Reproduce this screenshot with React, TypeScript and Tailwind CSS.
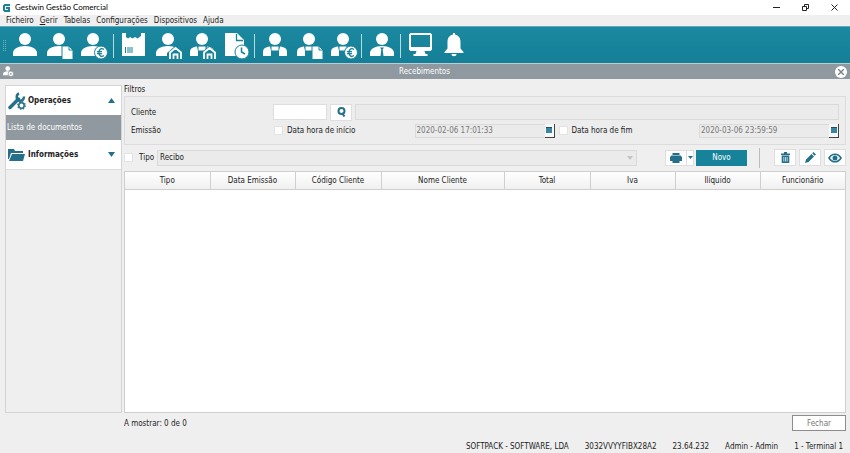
import type { ReactNode } from "react";

const Person = ({ tie, split }: { tie?: boolean; split?: boolean }) => (
  <>
    <circle cx="12" cy="6" r="6" />
    {split ? (
      <>
        <path d="M0 23v-4c0-3 2-5 7-5.500l1 4.500v5z" />
        <path d="M17 13.500c5 .5 7 2.500 7 5.500v4h-8v-5z" />
        <path d="M8.500 13.500h7v4h-7z" />
      </>
    ) : (
      <path d="M0 23v-3c0-4 5-7 12-7s12 3 12 7v3z" />
    )}
    {tie && <path d="M10 14.500h4l-1.300 2 .8 6.500h-3l.8-6.500z" fill="#16839b" />}
  </>
);

const Doc = () => (
  <>
    <path d="M15 13h7l4 4v9.500H15z" fill="#fff" stroke="#16839b" />
    <path d="M22 13v4h4" fill="none" stroke="#16839b" />
  </>
);

const Euro = () => (
  <>
    <circle cx="20" cy="19.500" r="6.500" fill="#fff" stroke="#16839b" />
    <path
      d="M23 16.500c-3-2-5 0-5 3s2 5 5 3M16 18.700h5M16 20.700h5"
      fill="none"
      stroke="#16839b"
      strokeWidth="1.300"
    />
  </>
);

const House = () => (
  <>
    <path d="M11 20l8-7 9 7v7H11z" fill="#16839b" />
    <path
      d="M14 26v-6.500l5.500-4.500 5.500 4.500V26M17.500 26v-4.500h4V26"
      fill="none"
      stroke="#fff"
      strokeWidth="1.800"
    />
  </>
);

const ToolButton = ({ label, children }: { label: string; children: ReactNode }) => (
  <button aria-label={label} className="w-[34px] shrink-0 pl-1">
    <svg width="28" height="27" viewBox="0 0 28 27" fill="#fff">
      {children}
    </svg>
  </button>
);

const Divider = () => <span className="h-6 w-px shrink-0 bg-[#b5dae2]" />;

const Toolbar = () => (
  <div className="flex h-[37px] items-center border-t border-[#63a9b8] bg-linear-to-b from-[#1b89a1] to-[#147f96] pt-[2px]">
    <svg width="9" height="12" fill="none" stroke="#6cb2c2" strokeDasharray="1 1" className="shrink-0">
      <path d="M3.500 0v12M5.500 0v12" />
    </svg>
    <ToolButton label="Clientes">
      <Person />
    </ToolButton>
    <ToolButton label="Documentos de clientes">
      <Person />
      <Doc />
    </ToolButton>
    <ToolButton label="Recebimentos">
      <Person />
      <Euro />
    </ToolButton>
    <span className="w-[2px]" />
    <Divider />
    <span className="w-1" />
    <ToolButton label="Artigos">
      <path d="M0 0h4v4l2 1.500L8 4l2.500 1.500L13 4l2.500 1.500L19 3V0h4v23H0z" />
      <path d="M3.500 14v6M6 14v6M8 14v6M10 14v6" stroke="#16839b" />
    </ToolButton>
    <ToolButton label="Armazéns">
      <Person />
      <House />
    </ToolButton>
    <ToolButton label="Fornecedores">
      <Person split />
      <House />
    </ToolButton>
    <ToolButton label="Pendentes">
      <path d="M1 0h12l7 7v16H1z" />
      <path d="M12.500 1v6.500H19" fill="none" stroke="#16839b" strokeWidth="1.300" />
      <circle cx="18" cy="19" r="7" stroke="#16839b" />
      <path d="M17.500 14.500V19l3.500 2" fill="none" stroke="#16839b" strokeWidth="1.500" />
    </ToolButton>
    <Divider />
    <span className="w-1" />
    <ToolButton label="Vendedores">
      <Person split />
    </ToolButton>
    <ToolButton label="Documentos de vendedores">
      <Person split />
      <Doc />
    </ToolButton>
    <ToolButton label="Comissões">
      <Person split />
      <Euro />
    </ToolButton>
    <Divider />
    <span className="w-1" />
    <ToolButton label="Funcionários">
      <Person tie />
    </ToolButton>
    <Divider />
    <span className="w-1" />
    <ToolButton label="Terminal">
      <path
        d="M1.500 0h20L23 1.500v15L21.500 18h-6l1 3h2v2h-14v-2h2l1-3h-6L0 16.500v-15zM2 2v12h19V2z"
        fillRule="evenodd"
      />
    </ToolButton>
    <ToolButton label="Notificações">
      <path d="M10 0h2v1.500c4 1 5.500 4 5.500 7.500v6.500l3 3.500v1h-19v-1l3-3.500V9c0-3.500 1.500-6.500 5.500-7.500zM8.500 21h5c0 3-5 3-5 0z" />
    </ToolButton>
  </div>
);

const TitleBar = () => (
  <header className="flex h-[15px] items-center bg-white pl-[3px] font-[Lato,sans-serif] text-[8px] text-black">
    <svg width="7" height="8" viewBox="0 0 7 8" fill="none" stroke="#16839b" strokeWidth="2">
      <path d="M7 1H2L1 2v4l1 1h4V4H3" />
    </svg>
    <h1 className="ml-[5px] grow">Gestwin Gestão Comercial</h1>
    <div className="flex gap-[22px] pr-3">
      <button aria-label="Minimizar">
        <svg width="7" height="7" stroke="#222"><path d="M0 3.500h7" /></svg>
      </button>
      <button aria-label="Restaurar">
        <svg width="7" height="7" fill="none" stroke="#222"><path d="M.5 2.500h4v4h-4zM2.500 2V.5h4v4H5" /></svg>
      </button>
      <button aria-label="Fechar janela">
        <svg width="7" height="7" stroke="#222"><path d="M.5.5l6 6M6.500.5l-6 6" /></svg>
      </button>
    </div>
  </header>
);

const Menu = () => (
  <nav className="flex h-[11px] items-center gap-[6px] pl-[6px]">
    <button>Ficheiro</button>
    <button><u>G</u>erir</button>
    <button>Tabelas</button>
    <button>Configurações</button>
    <button>Dispositivos</button>
    <button>Ajuda</button>
  </nav>
);

const Sidebar = () => (
  <aside className="flex w-[117px] shrink-0 flex-col border border-[#d4d4d4]">
    <button className="flex h-[29px] items-center bg-white px-[2px] font-bold">
      <svg width="18" height="18" viewBox="0 0 18 18" fill="none" stroke="#24708a">
        <path d="M2 15.500L10.500 7" strokeWidth="3.500" strokeLinecap="round" />
        <path d="M11 1.500c-3 1-3 6 0 7s5-1 5-4" strokeWidth="2.500" />
        <circle cx="13.500" cy="13.500" r="2.700" strokeWidth="1.500" />
        <circle cx="13.500" cy="13.500" r="3.800" strokeWidth="1.200" strokeDasharray="1.500 1.480" />
      </svg>
      <span className="ml-[2px] grow text-left">Operações</span>
      <svg width="7" height="5" fill="#24708a" className="mr-1"><path d="M0 5L3.500 0 7 5z" /></svg>
    </button>
    <a href="#lista" className="flex h-[25px] items-center bg-[#8f999f] pl-px text-white">
      Lista de documentos
    </a>
    <button className="flex h-[30px] items-center border-b border-[#ddd] bg-white px-[2px] font-bold">
      <svg width="18" height="14" viewBox="0 0 18 14" fill="#24708a">
        <path d="M0 1h6l1 2h8v2H3L1 11H0z" />
        <path d="M4 6h13l-2 7H1z" />
      </svg>
      <span className="ml-[2px] grow text-left">Informações</span>
      <svg width="7" height="5" fill="#24708a" className="mr-1"><path d="M0 0h7L3.500 5z" /></svg>
    </button>
  </aside>
);

const CheckBox = ({ id }: { id: string }) => (
  <input
    id={id}
    type="checkbox"
    className="size-[9px] shrink-0 appearance-none border border-[#e2e2e2] bg-white"
  />
);

const DateField = ({ id, label, value }: { id: string; label: string; value: string }) => (
  <div className="flex min-w-0 flex-1 items-center">
    <CheckBox id={`${id}-on`} />
    <label htmlFor={`${id}-on`} className="ml-1 flex-1">{label}</label>
    <input
      aria-label={label}
      disabled
      defaultValue={value}
      className="h-[14px] w-[130px] min-w-0 border border-r-0 border-[#dadada] bg-[#ebebeb] px-px text-[#777]"
    />
    <button
      aria-label={`Calendário ${label}`}
      className="flex h-[14px] w-[10px] items-center justify-center border-r border-b border-[#444] bg-[#f8f8f8]"
    >
      <svg width="6" height="6"><path d="M0 0h6v6H0z" fill="#3986a3" /><path d="M0 .5h6" stroke="#204f68" /></svg>
    </button>
  </div>
);

const Filters = () => (
  <section>
    <h2 className="h-[11px] leading-[10px]">Filtros</h2>
    <div className="flex h-[49px] flex-col justify-center gap-[3px] border border-[#dcdcdc] bg-[#ededed] px-[6px]">
      <div className="flex items-center">
        <label htmlFor="cliente" className="w-[142px] shrink-0">Cliente</label>
        <input id="cliente" className="h-4 w-[54px] border border-[#dedede] bg-white" />
        <button
          aria-label="Procurar"
          className="mx-[3px] flex h-[17px] w-[22px] shrink-0 items-center justify-center border border-[#dedede] bg-white"
        >
          <svg width="9" height="10" viewBox="0 0 9 10" fill="none" stroke="#24708a" strokeWidth="2">
            <circle cx="4.500" cy="4" r="3" />
            <path d="M5 6l2.500 3.500" />
          </svg>
        </button>
        <input aria-label="Nome do cliente" disabled className="h-4 min-w-0 flex-1 border border-[#dadada] bg-[#ebebeb]" />
      </div>
      <div className="flex items-center">
        <span className="w-[143px] shrink-0">Emissão</span>
        <div className="flex flex-1 gap-1">
          <DateField id="inicio" label="Data hora de início" value="2020-02-06 17:01:33" />
          <DateField id="fim" label="Data hora de fim" value="2020-03-06 23:59:59" />
        </div>
      </div>
    </div>
  </section>
);

const Actions = () => (
  <div className="mt-1 flex h-[17px] items-center">
    <CheckBox id="tipo-on" />
    <label htmlFor="tipo-on" className="ml-[6px] w-[18px]">Tipo</label>
    <div className="relative flex flex-1">
      <select
        aria-label="Tipo"
        disabled
        className="h-4 w-full appearance-none border border-[#dadada] bg-[#ebebeb] px-[2px] opacity-100"
      >
        <option>Recibo</option>
      </select>
      <svg width="6" height="4" fill="#c4c4c4" className="absolute top-[6px] right-1"><path d="M0 0h6L3 4z" /></svg>
    </div>
    <div className="ml-7 flex h-4 border border-[#dedede] bg-white">
      <button aria-label="Imprimir" className="flex w-5 items-center justify-center">
        <svg width="12" height="10" viewBox="0 0 12 10" fill="#24708a">
          <path d="M2.500 0h7v2h-7zM1.500 2.500h9L12 4v4H9.500v2h-7V8H0V4z" />
        </svg>
      </button>
      <button aria-label="Opções de impressão" className="flex w-[7px] items-center justify-center border-l border-[#dedede]">
        <svg width="5" height="3" fill="#24708a"><path d="M0 0h5L2.500 3z" /></svg>
      </button>
    </div>
    <button className="ml-[2px] h-4 w-[51px] bg-[#16839b] text-white">Novo</button>
    <span className="ml-3 h-5 w-px bg-[#bcbcbc]" />
    <div className="ml-[14px] flex gap-[3px]">
      <button aria-label="Eliminar" className="flex h-[17px] w-[22px] items-center justify-center border border-[#dedede] bg-white">
        <svg width="9" height="11" viewBox="0 0 9 11" fill="#24708a">
          <path d="M0 1.500h3V0h3v1.500h3V3H0zM.7 3.500h7.600V11H.7z" />
          <path d="M2.800 5v4.500M4.500 5v4.500M6.200 5v4.500" stroke="#fff" strokeWidth=".7" />
        </svg>
      </button>
      <button aria-label="Editar" className="flex h-[17px] w-[22px] items-center justify-center border border-[#dedede] bg-white">
        <svg width="11" height="11" viewBox="0 0 11 11" fill="#24708a">
          <path d="M0 11l1-3.500L6.500 2 9 4.500 3.500 10zM7.200 1.300L8.500 0 11 2.500 9.700 3.800z" />
        </svg>
      </button>
      <button aria-label="Ver" className="flex h-[17px] w-[22px] items-center justify-center border border-[#dedede] bg-white">
        <svg width="14" height="10" viewBox="0 0 14 10" fill="none" stroke="#24708a" strokeWidth="1.600">
          <path d="M1 5c3-5 9-5 12 0-3 5-9 5-12 0z" />
          <circle cx="7" cy="5" r="1.700" fill="#24708a" />
        </svg>
      </button>
    </div>
  </div>
);

const columns = [
  { name: "Tipo", width: "w-[85px]" },
  { name: "Data Emissão", width: "w-[85px]" },
  { name: "Código Cliente", width: "w-[86px]" },
  { name: "Nome Cliente", width: "" },
  { name: "Total", width: "w-[86px]" },
  { name: "Iva", width: "w-[85px]" },
  { name: "Ilíquido", width: "w-[85px]" },
  { name: "Funcionário", width: "w-[85px]" },
];

const DocumentsTable = () => (
  <div className="mt-[5px] min-h-40 flex-1 border border-[#cfcfcf] bg-white">
    <table className="w-full table-fixed border-collapse">
      <thead>
        <tr className="h-[17px] bg-linear-to-b from-white to-[#f0f0f0]">
          {columns.map((c) => (
            <th
              key={c.name}
              className={`${c.width} border-r border-b border-[#cfcfcf] p-0 text-center font-normal last:border-r-0`}
            >
              {c.name}
            </th>
          ))}
        </tr>
      </thead>
      <tbody />
    </table>
  </div>
);

export default function App() {
  return (
    <div className="flex min-h-screen flex-col bg-[#efefef] font-['DejaVu_Sans_Condensed','DejaVu_Sans',sans-serif] text-[8px] leading-[13px] text-[#1c1c1c]">
      <TitleBar />
      <Menu />
      <Toolbar />
      <div className="flex h-4 items-center border-t border-[#b9cdd2] bg-[#8f999f] px-[3px] text-white">
        <svg width="11" height="11" viewBox="0 0 28 27" fill="#fff">
          <Person />
          <circle cx="20" cy="19.500" r="7" stroke="#8f999f" strokeWidth="2" />
          <circle cx="20" cy="19.500" r="2.500" fill="#8f999f" />
        </svg>
        <h2 className="flex-1 text-center">Recebimentos</h2>
        <button aria-label="Fechar separador" className="flex size-3 items-center justify-center rounded-full bg-white">
          <svg width="6" height="6" stroke="#7b868c" strokeWidth="1.500"><path d="M0 0l6 6M6 0L0 6" /></svg>
        </button>
      </div>
      <main className="flex flex-1 gap-[2px] pt-[6px] pr-1 pl-[5px]">
        <Sidebar />
        <div className="flex min-w-0 flex-1 flex-col">
          <Filters />
          <Actions />
          <DocumentsTable />
        </div>
      </main>
      <div className="mt-[2px] flex h-4 items-center justify-between pr-1 pl-[124px]">
        <span>A mostrar: 0 de 0</span>
        <button className="h-4 w-[54px] border border-[#8d8d8d] bg-white text-[#777]">Fechar</button>
      </div>
      <footer className="flex h-[22px] items-center justify-end gap-4 pt-2 pr-[7px]">
        <span>SOFTPACK - SOFTWARE, LDA</span>
        <span>3032VVYYFIBX28A2</span>
        <span>23.64.232</span>
        <span>Admin - Admin</span>
        <span>1 - Terminal 1</span>
      </footer>
    </div>
  );
}
